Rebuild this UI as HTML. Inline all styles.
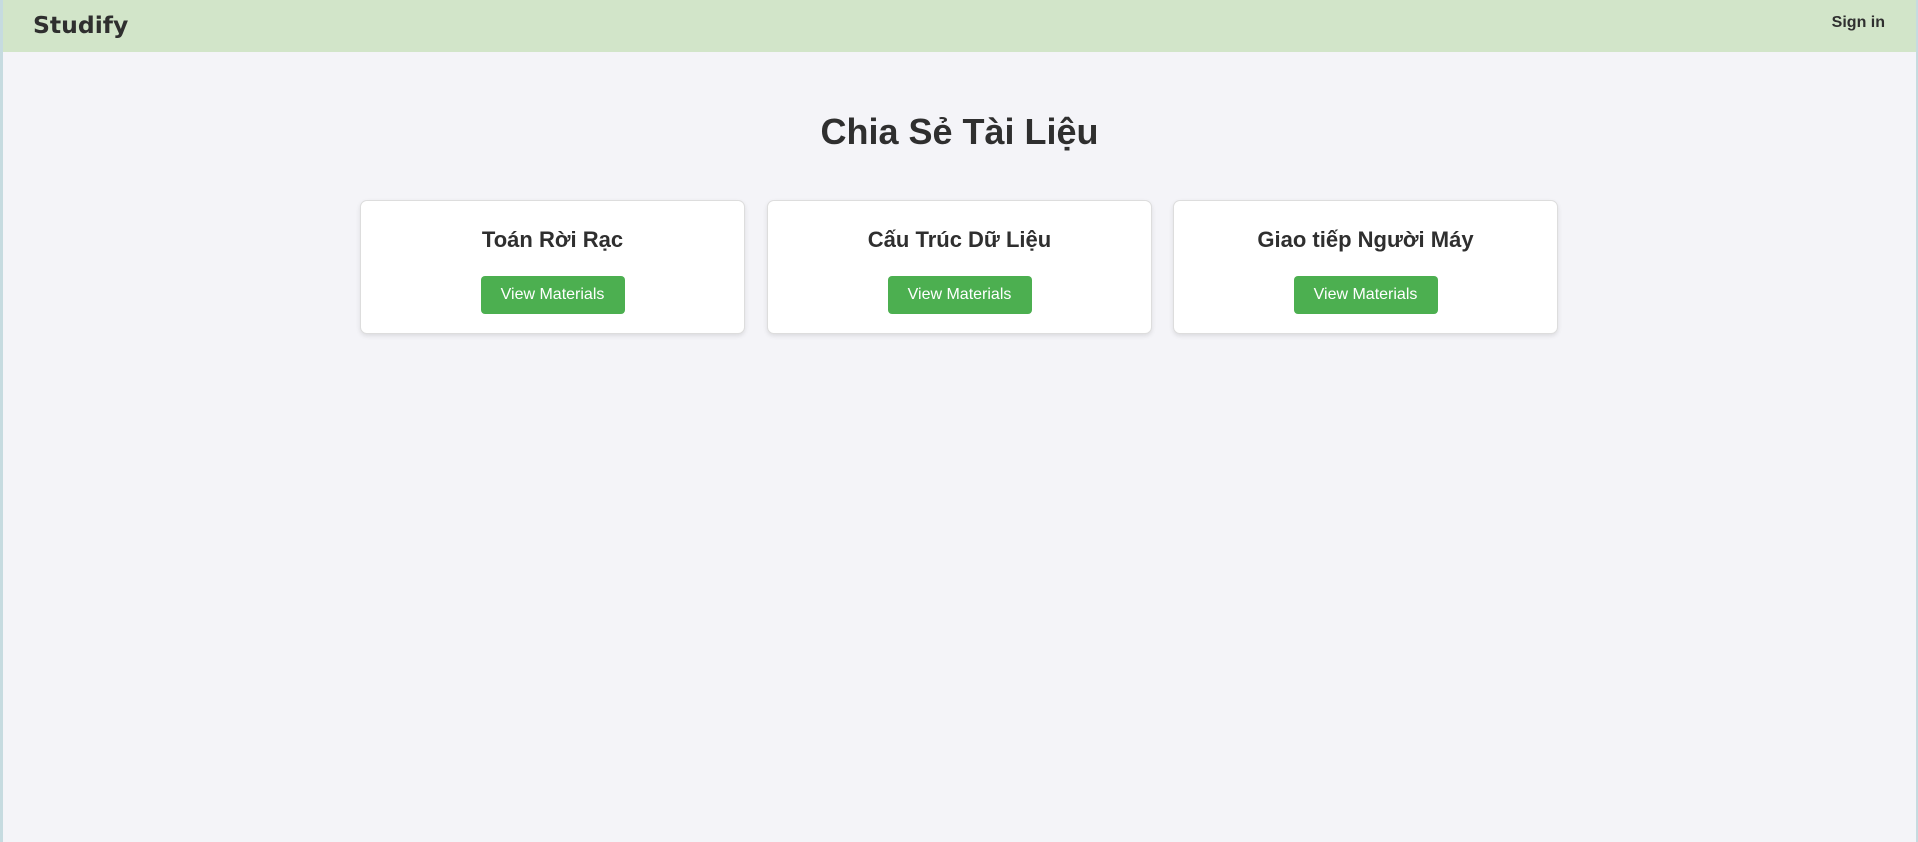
<!DOCTYPE html>
<html><head><meta charset="utf-8"><style>
*{box-sizing:border-box;margin:0;padding:0}
html,body{width:1918px;height:842px;overflow:hidden}
body{background:#f4f4f8;font-family:"Liberation Sans",Arial,sans-serif;color:#333;position:relative;border-left:3px solid #c6dbe0;border-right:2px solid #c6dbe0}
.hdr{position:absolute;left:0;top:0;width:100%;height:52px;background:#d2e5c9}
.logo{position:absolute;left:30px;top:11px;font-family:"DejaVu Sans",Verdana,sans-serif;font-size:23.5px;font-weight:bold;color:#2f2f2f}
.sign{position:absolute;right:31px;top:14px;font-size:16px;font-weight:bold;color:#2f2f2f}
h1{position:absolute;left:0;width:100%;top:111px;text-align:center;font-size:36px;font-weight:bold;color:#2f2f2f}
.card{position:absolute;top:200px;width:385px;height:134px;background:#fff;border:1px solid #ddd;border-radius:7px;box-shadow:0 2px 5px rgba(0,0,0,.1);text-align:center}
.card h3{margin-top:26px;font-size:22px;font-weight:bold;color:#2f2f2f}
.btn{display:inline-block;margin-top:23px;width:144px;height:38px;line-height:38px;background:#4caf50;color:#fff;border-radius:4px;font-size:16px}
</style></head><body>
<div class="hdr"><div class="logo">Studify</div><div class="sign">Sign in</div></div>
<h1>Chia Sẻ Tài Liệu</h1>
<div class="card" style="left:357px"><h3>Toán Rời Rạc</h3><span class="btn">View Materials</span></div>
<div class="card" style="left:764px"><h3>Cấu Trúc Dữ Liệu</h3><span class="btn">View Materials</span></div>
<div class="card" style="left:1170px"><h3>Giao tiếp Người Máy</h3><span class="btn">View Materials</span></div>
</body></html>
